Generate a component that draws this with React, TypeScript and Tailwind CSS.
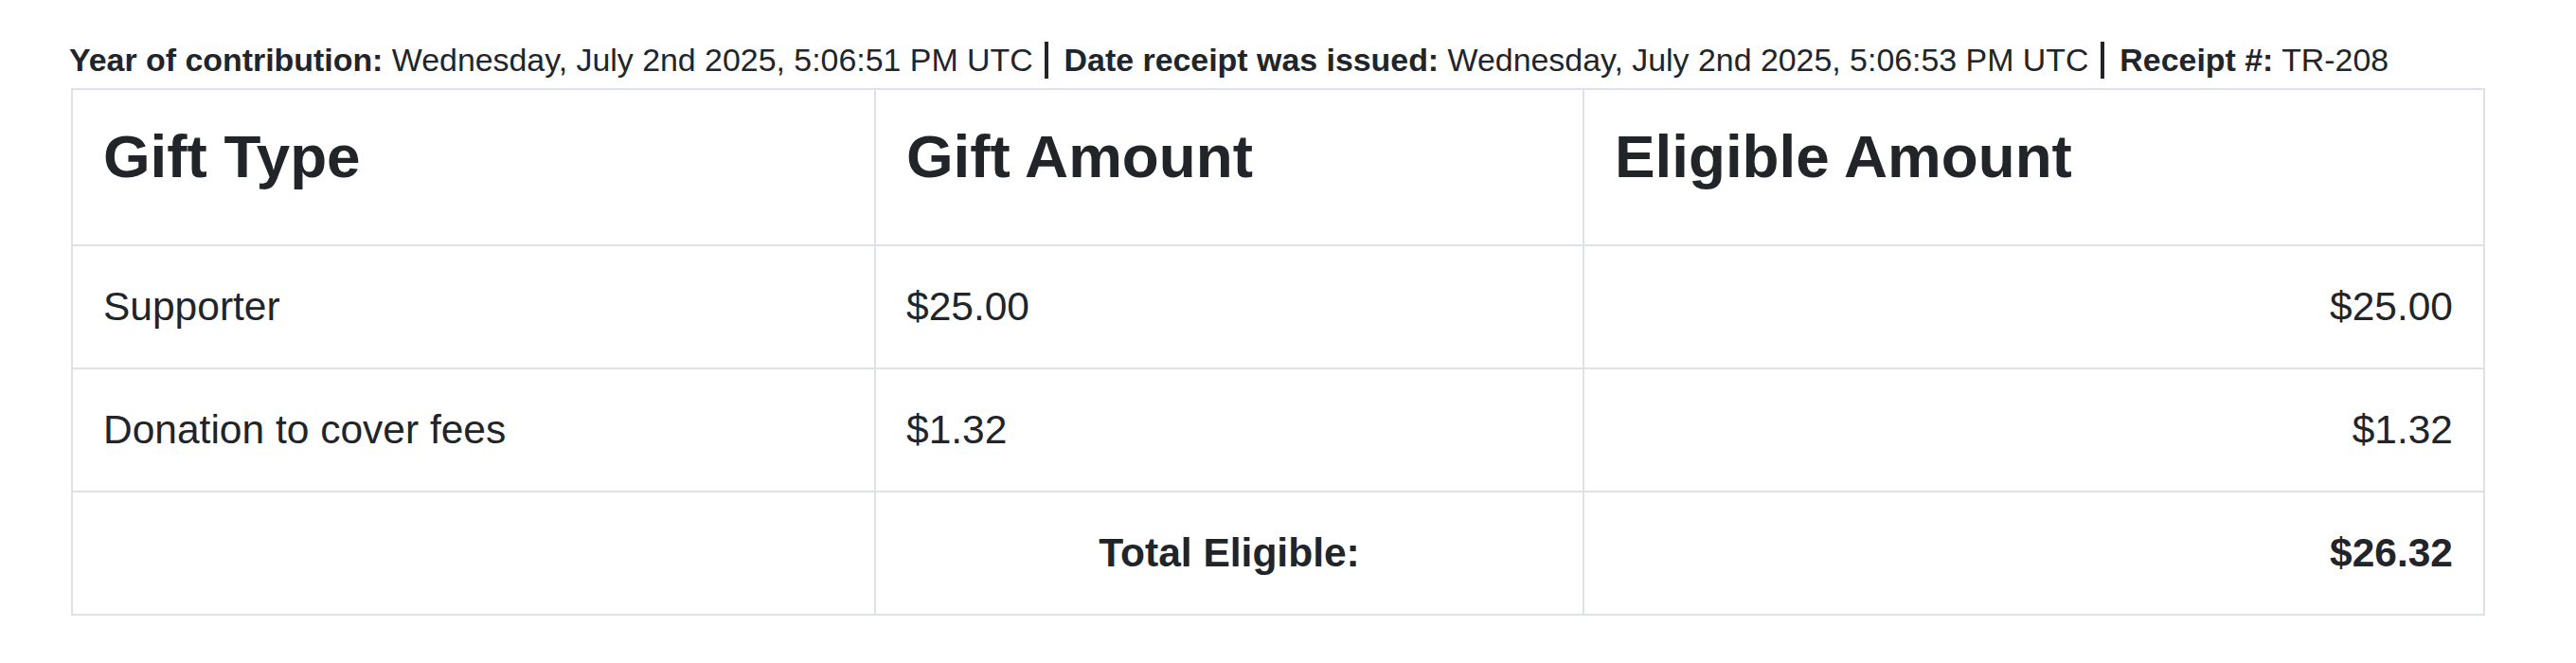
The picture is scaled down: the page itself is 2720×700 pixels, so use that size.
const rows = [
  { type: "Supporter", amount: "$25.00", eligible: "$25.00" },
  { type: "Donation to cover fees", amount: "$1.32", eligible: "$1.32" },
];

function Bar() {
  return <span className="inline-block w-[4px] h-[39px] bg-[#212529] align-[-8px] ml-[3px] mr-[7px]" />;
}

export default function App() {
  return (
    <div className="min-h-[700px] bg-white px-[75px] pt-[38px] text-[#212529] font-['Liberation_Sans',Arial,sans-serif]">
      <p className="text-[33.9px] leading-[1.5] mb-[4px] -ml-[2px] whitespace-nowrap">
        <b>Year of contribution:</b> Wednesday, July 2nd 2025, 5:06:51 PM UTC <Bar /> <b>Date receipt was issued:</b>{" "}
        Wednesday, July 2nd 2025, 5:06:53 PM UTC <Bar /> <b>Receipt #:</b> TR-208
      </p>
      <table className="w-[2549px] table-fixed border-collapse border-2 border-[#dee2e6]">
        <thead>
          <tr>
            <th className="w-[848px] border-2 border-[#dee2e6] px-[32px] py-[32px] text-left align-top">
              <h2 className="text-[63.75px] leading-[1.2] font-bold mb-[23px]">Gift Type</h2>
            </th>
            <th className="w-[748px] border-2 border-[#dee2e6] px-[32px] py-[32px] text-left align-top">
              <h2 className="text-[63.75px] leading-[1.2] font-bold mb-[23px]">Gift Amount</h2>
            </th>
            <th className="border-2 border-[#dee2e6] px-[32px] py-[32px] text-left align-top">
              <h2 className="text-[63.75px] leading-[1.2] font-bold mb-[23px]">Eligible Amount</h2>
            </th>
          </tr>
        </thead>
        <tbody className="text-[42.5px] leading-[1.5]">
          {rows.map((r) => (
            <tr key={r.type}>
              <td className="border-2 border-[#dee2e6] px-[32px] py-[32px]">{r.type}</td>
              <td className="border-2 border-[#dee2e6] px-[32px] py-[32px]">{r.amount}</td>
              <td className="border-2 border-[#dee2e6] px-[32px] py-[32px] text-right">{r.eligible}</td>
            </tr>
          ))}
          <tr className="font-bold">
            <td className="border-2 border-[#dee2e6] px-[32px] py-[32px]"></td>
            <td className="border-2 border-[#dee2e6] px-[32px] py-[32px] text-center">Total Eligible:</td>
            <td className="border-2 border-[#dee2e6] px-[32px] py-[32px] text-right">$26.32</td>
          </tr>
        </tbody>
      </table>
    </div>
  );
}
